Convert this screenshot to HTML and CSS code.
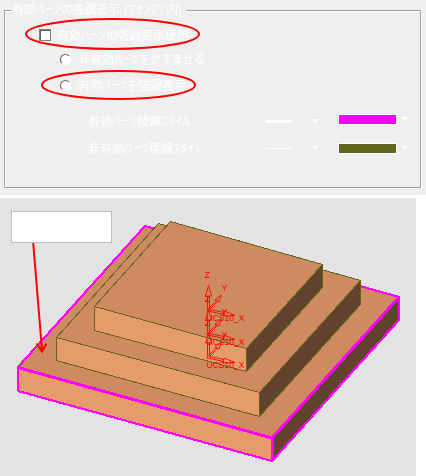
FILE: index.html
```
<!DOCTYPE html>
<html lang="ja">
<head>
<meta charset="utf-8">
<title>有効パーツの強調表示</title>
<link rel="stylesheet" href="styles.css">
</head>
<body>
<section class="panel">
  <div class="group">
    <div class="legend">有効<span class="kana parts">パーツ</span><span class="no">の</span>強調表示<span class="paren open">(</span><span class="kana assembly">アセンブリ</span>内<span class="paren">)</span></div>
    <label class="row use"><span class="checkbox"></span><span class="text">有効<span class="kana parts">パーツ</span><span class="no">の</span>強調表示使用</span></label>
    <label class="row dim"><span class="radio"></span><span class="text">非有効<span class="kana parts">パーツ</span><span class="kana haze">をかすませる</span></span></label>
    <label class="row bright"><span class="radio"></span><span class="text">有効<span class="kana parts">パーツ</span><span class="no">を</span>強調表示</span></label>
    <div class="row style first"><span class="text">有効<span class="kana parts">パーツ</span>稜線<span class="kana styles">スタイル</span></span><i class="line thick"></i><i class="arrow"></i><i class="swatch magenta"></i><i class="arrow last"></i></div>
    <div class="row style"><span class="text">非有効<span class="kana parts">パーツ</span>稜線<span class="kana styles">スタイル</span></span><i class="line"></i><i class="arrow"></i><i class="swatch olive"></i><i class="arrow last"></i></div>
  </div>
  <svg class="marks" width="426" height="195" viewBox="0 0 426 195">
    <ellipse cx="112.5" cy="34" rx="86.5" ry="15"/>
    <ellipse cx="118.5" cy="85" rx="76.5" ry="14"/>
  </svg>
</section>
<section class="view">
  <svg width="416" height="278" viewBox="0 198 416 278">
    <defs>
      <g id="ucs">
        <path d="M207.500 308V296M209.500 308V296M205.500 296L208.500 285.500L211.500 296ZM209 308L217 300M210 309L218 301M215 300L221.500 295L219 302ZM210 309.500L224 312.500M210 311.500L224 314.500M224 311L235 315.500L223 316Z"/>
        <circle cx="208.500" cy="310" r="1.600"/>
        <text class="label" x="206.500" y="321" textLength="38" lengthAdjust="spacingAndGlyphs">UCS10_X</text>
      </g>
    </defs>
    <path class="top" d="M18 367L145 226L399 296L272 438Z"/>
    <path class="front" d="M18 367L272 438V461L18 391Z"/>
    <path class="side" d="M272 438L399 297V320L272 461Z"/>
    <path class="active" d="M18 391V367L145 226L399 297V320L272 461L18 391"/>
    <path class="active bold" d="M18 367.500L272 438V461M272 438L399 297"/>
    <g class="part">
      <path class="top" d="M56.500 337.500L158.500 223.500L360.500 280.500L259.500 392.500Z"/>
      <path class="front" d="M56.500 337.500L259.500 392.500V416.500L56.500 360.500Z"/>
      <path class="side" d="M259.500 392.500L360.500 280.500V304.500L259.500 416.500Z"/>
    </g>
    <g class="part">
      <path class="top" d="M94.500 306.500L170.500 221.500L322.500 264.500L246.500 348.500Z"/>
      <path class="front" d="M94.500 306.500L246.500 348.500V371.500L94.500 330.500Z"/>
      <path class="side" d="M246.500 348.500L322.500 264.500V287.500L246.500 371.500Z"/>
    </g>
    <g class="axes">
      <use href="#ucs"/>
      <use href="#ucs" y="24"/>
      <use href="#ucs" y="47"/>
      <text class="label" x="204.500" y="278">Z</text>
      <text class="label" x="221.500" y="291">Y</text>
      <text class="label" x="221.500" y="315">Y</text>
      <text class="label" x="221.500" y="338">Y</text>
      <text class="label" x="204.500" y="302">Z</text>
      <text class="label" x="204.500" y="326">Z</text>
    </g>
    <rect class="note" x="11.500" y="211.500" width="100" height="31"/>
    <path class="pointer" d="M33.200 243L42 350M36.500 343.500L42 351.500L46.500 343.500"/>
  </svg>
</section>
</body>
</html>
```
FILE: styles.css
```
body {
  margin: 0;
  width: 426px;
  height: 476px;
  overflow: hidden;
  background: #fff;
  color: #fff;
  font: 12px/14px "Noto Sans CJK JP", sans-serif;
}
.panel {
  position: relative;
  box-sizing: border-box;
  height: 195px;
  padding: 10px 5px 7px 4px;
  background: #efefef;
}
.group {
  box-sizing: border-box;
  height: 178px;
  border: 1px solid #9f9f9f;
  box-shadow: 1px 1px #fff, inset 1px 1px #fff;
}
.legend {
  display: flex;
  width: 172px;
  height: 14px;
  margin: -9px 0 0 6px;
  padding: 0 2px 0 1px;
  background: #efefef;
  white-space: nowrap;
}
.row {
  display: flex;
  align-items: center;
  height: 14px;
  white-space: nowrap;
}
.text { display: flex; }
.kana {
  display: block;
  transform-origin: 0 50%;
}
.parts { width: 25px; transform: scaleX(.7); }
.assembly { width: 38px; transform: scaleX(.63); }
.styles { width: 29px; transform: scaleX(.6); }
.haze { width: 68px; transform: scaleX(.92); }
.no { width: 11px; }
.paren { width: 4px; }
.open { margin-left: 4px; }
.use { margin: 12px 0 0 34px; }
.dim { margin: 10px 0 0 54px; }
.bright { margin: 12px 0 0 54px; }
.style { margin: 13px 0 0 83px; }
.first { margin-top: 22px; }
.checkbox {
  box-sizing: border-box;
  width: 12px;
  height: 12px;
  margin-right: 6px;
  border: 1px solid #808080;
  box-shadow: inset 1px 1px #606060;
  background: #fff;
}
.radio {
  box-sizing: border-box;
  width: 11px;
  height: 11px;
  margin: 0 7px 0 1px;
  border: 1.500px solid;
  border-color: #606060 #fff #fff #606060;
  border-radius: 50%;
  background: #fff;
}
.style .text { width: 178px; }
.line { width: 26px; height: 1px; background: #fff; }
.thick { height: 3px; }
.arrow {
  width: 6px;
  height: 4px;
  margin-left: 20px;
  background: #fff;
  clip-path: polygon(0 0, 100% 0, 50% 100%);
}
.swatch {
  width: 57px;
  height: 9px;
  margin: -4px 0 0 20px;
  border: 1px solid #fff;
}
.magenta { background: #f0f; }
.olive { margin-top: 0; background: #64641e; }
.last { margin: -4px 0 0 5px; }
.olive + .last { margin-top: 0; }
.marks {
  position: absolute;
  left: 0;
  top: 0;
  fill: none;
  stroke: #f00;
  stroke-width: 2;
}
.view {
  width: 416px;
  height: 278px;
  margin-top: 3px;
  background: #e3e3e3;
}
.view svg { display: block; }
.top { fill: #ce8b5f; }
.front { fill: #e69b6b; }
.side { fill: #61422d; }
.part { stroke: #64641e; stroke-width: 1; shape-rendering: crispEdges; }
.active { fill: none; stroke: #f0f; stroke-width: 2.2; shape-rendering: crispEdges; }
.bold { stroke-width: 3; }
.axes { fill: none; stroke: #f00; stroke-width: .9; }
.label {
  fill: #f00;
  stroke: none;
  font: 9px "Liberation Sans", sans-serif;
}
.note { fill: #fff; stroke: #bdbdbd; }
.pointer { fill: none; stroke: #f00; stroke-width: 2; }
```
